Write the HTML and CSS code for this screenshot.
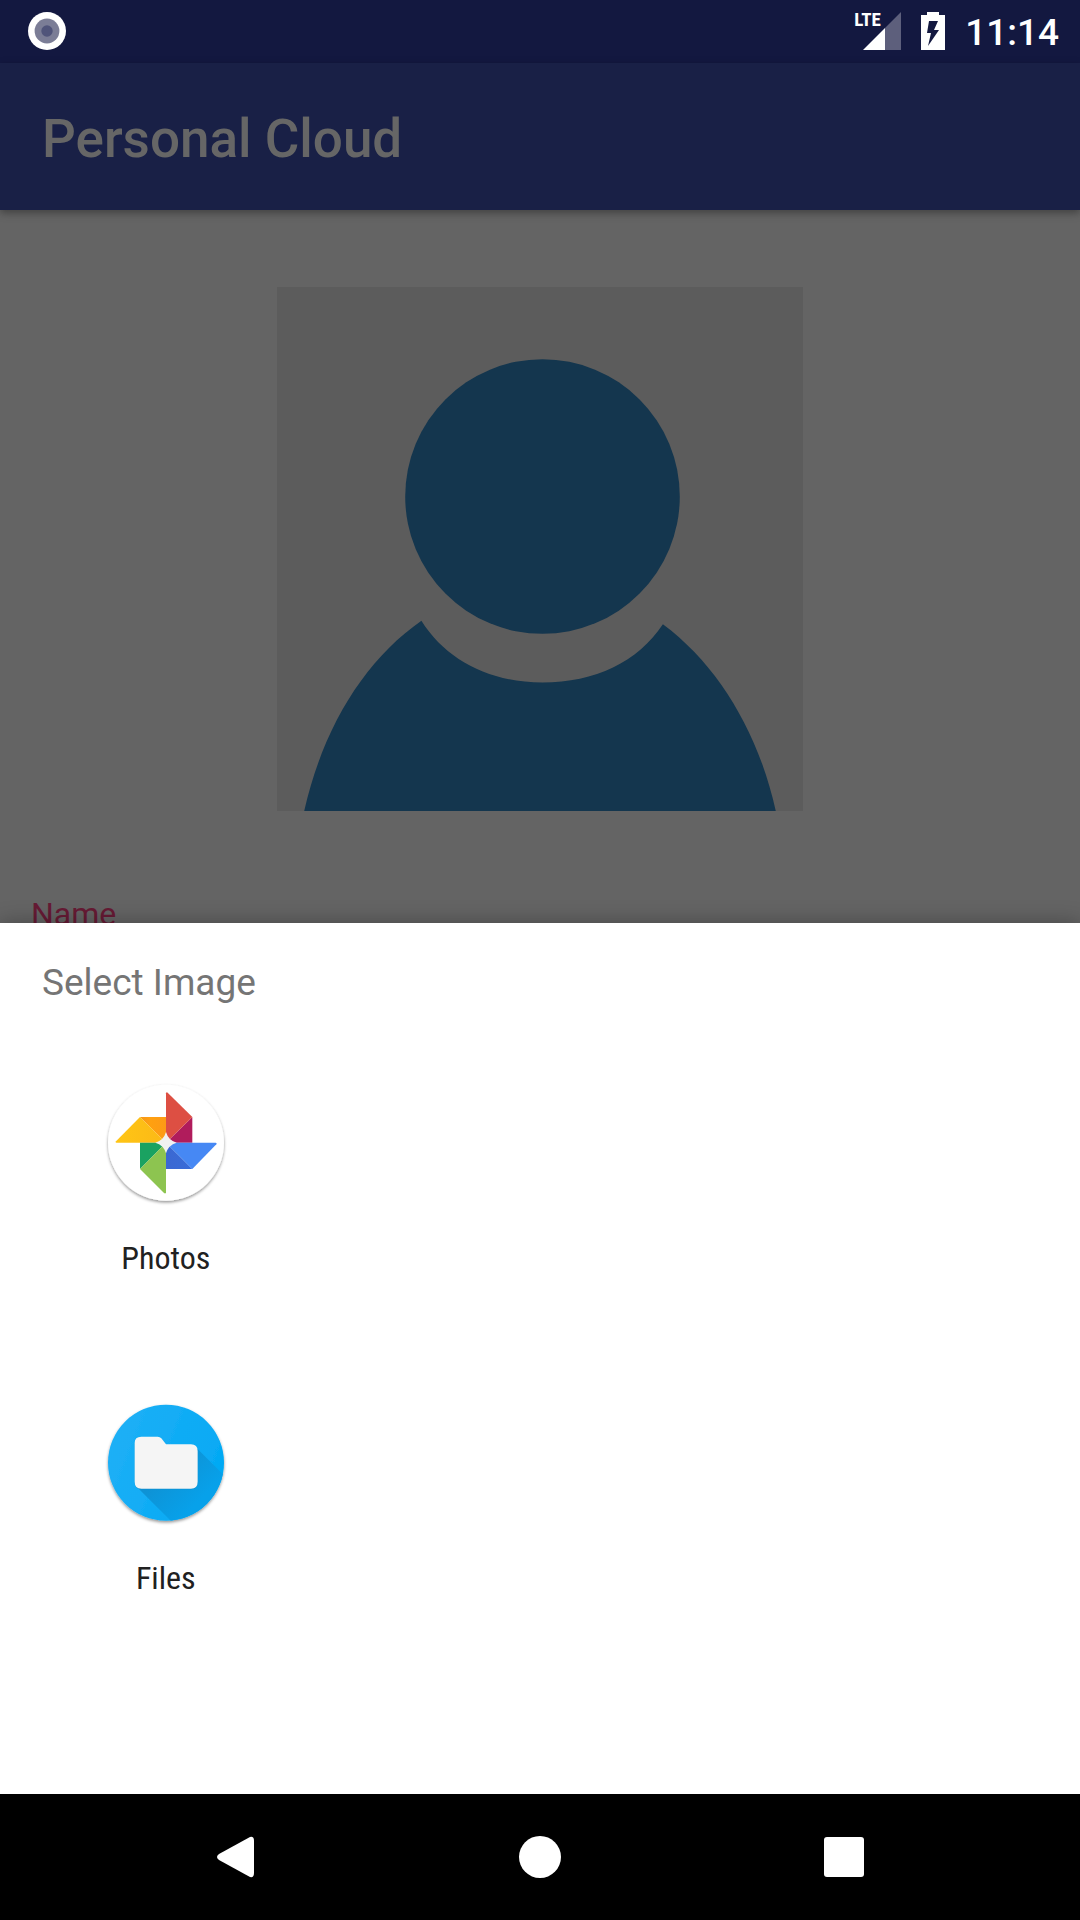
FILE: index.html
```html
<!DOCTYPE html>
<html lang="en">
<head>
<meta charset="utf-8">
<meta name="viewport" content="width=device-width, initial-scale=1">
<title>Personal Cloud</title>
<link rel="stylesheet" href="styles.css">
</head>
<body class="screen">
  <div class="status-bar">
    <svg class="status-app" viewBox="0 0 40 40" aria-hidden="true">
      <circle cx="20" cy="20" r="19" fill="#fff"/>
      <circle cx="20" cy="20" r="12.4" fill="#7b7d96"/>
      <circle cx="20" cy="20" r="5.7" fill="#50547a"/>
    </svg>
    <div class="status-icons">
      <div class="signal">
        <span class="signal-type">LTE</span>
        <svg class="signal-bars" viewBox="0 0 38 38" aria-hidden="true">
          <path d="M22 16 38 0V38H22Z" fill="#5d5f7c"/>
          <path d="M0 38 22 16V38Z" fill="#fff"/>
        </svg>
      </div>
      <svg class="battery" viewBox="0 0 24 38" aria-hidden="true">
        <path d="M6 0H18V3H24V38H0V3H6Z" fill="#fff"/>
        <path d="M8 9H17L13 18H18L7 34 10 21H6Z" fill="#131840"/>
      </svg>
      <time class="clock">11:14</time>
    </div>
  </div>

  <header class="app-bar"><h1 class="app-title">Personal Cloud</h1></header>

  <main class="profile">
    <svg class="avatar" viewBox="-1 0 526 524" role="img" aria-label="Profile picture">
      <rect x="-1" width="526" height="524" fill="#5c5c5c"/>
      <circle cx="264.5" cy="209.5" r="137.3" fill="#14364e"/>
      <path d="M26 525C45 440 87 373 143.4 333.7C168 373 212 395.5 264.5 395.5C317 395.5 360 375 384.9 337.3C441 379 481 447 498 525Z" fill="#14364e"/>
    </svg>
    <p class="field-label">Name</p>
  </main>

  <section class="sheet" aria-labelledby="sheet-title">
    <h2 class="sheet-title" id="sheet-title">Select Image</h2>
    <div class="targets">
      <button class="target" type="button">
        <svg class="target-icon" viewBox="39 30 378 378" aria-hidden="true">
          <defs>
            <filter id="drop" x="-10%" y="-10%" width="120%" height="125%">
              <feDropShadow dx="0" dy="5" stdDeviation="4" flood-color="#000" flood-opacity=".42"/>
            </filter>
            <linearGradient id="yellow" x1="0" x2="1"><stop offset="0" stop-color="#ffc515"/><stop offset="1" stop-color="#fbb917"/></linearGradient>
            <linearGradient id="orange" x1="0" x2="1"><stop offset="0" stop-color="#f5961a"/><stop offset=".4" stop-color="#ffa010"/><stop offset="1" stop-color="#fd9a16"/></linearGradient>
            <linearGradient id="blue" x1="0" x2="1"><stop offset="0" stop-color="#3b68d2"/><stop offset="1" stop-color="#396cd8"/></linearGradient>
          </defs>
          <circle cx="228" cy="218" r="174" fill="#fff" filter="url(#drop)"/>
          <path d="M150 141H228V218Z" fill="url(#orange)"/>
          <path d="M150 141 228 218H79Q75 218 78 214Z" fill="url(#yellow)"/>
          <path d="M307 141V218H228Z" fill="#b01c5c"/>
          <path d="M228 218V70Q229 65 233 68L307 141Z" fill="#dd4f43"/>
          <path d="M228 218V297H307Z" fill="url(#blue)"/>
          <path d="M228 218H377Q382 219 379 223L307 297Z" fill="#4688f4"/>
          <path d="M228 218H150V297Z" fill="#1aa261"/>
          <path d="M228 218V368Q226 372 222 369L150 297Z" fill="#8dc450"/>
          <path d="M228 186Q235 211 260 218Q235 225 228 250Q221 225 196 218Q221 211 228 186Z" fill="#f1f1f1"/>
        </svg>
        <span class="target-label">Photos</span>
      </button>
      <button class="target" type="button">
        <svg class="target-icon" viewBox="39 30 378 378" aria-hidden="true">
          <defs>
            <linearGradient id="sky" x1="0" y1=".2" x2="1" y2=".6"><stop offset="0" stop-color="#20b0f6"/><stop offset="1" stop-color="#03a9f4"/></linearGradient>
            <linearGradient id="cast" gradientUnits="userSpaceOnUse" x1="190" y1="250" x2="300" y2="360"><stop offset="0" stop-color="#0f90d2"/><stop offset="1" stop-color="#07a1ea"/></linearGradient>
            <clipPath id="disc"><circle cx="228" cy="218" r="174"/></clipPath>
          </defs>
          <circle cx="228" cy="218" r="174" fill="url(#sky)" filter="url(#drop)"/>
          <path d="M140 290 319 173 419 273V430H280Z" fill="url(#cast)" clip-path="url(#disc)"/>
          <path d="M154 142H203Q210 142 214 147L228 165H303Q323 165 323 185V277Q323 298 303 298H154Q134 298 134 277V161Q134 142 154 142Z" fill="#0a83bd" opacity=".5"/>
          <path d="M154 140H203Q210 140 214 145L228 163H303Q323 163 323 183V275Q323 296 303 296H154Q134 296 134 275V159Q134 140 154 140Z" fill="#f5f5f5"/>
        </svg>
        <span class="target-label">Files</span>
      </button>
    </div>
  </section>

  <nav class="nav-bar" aria-label="System">
    <button class="nav-button" type="button" aria-label="Back">
      <svg class="nav-icon" viewBox="0 0 42 42" aria-hidden="true"><path d="M35 1Q39 0 39 5V37Q39 42 35 41L4 24Q0 21 4 18Z" fill="#fff"/></svg>
    </button>
    <button class="nav-button" type="button" aria-label="Home">
      <svg class="nav-icon" viewBox="0 0 42 42" aria-hidden="true"><circle cx="21" cy="21" r="21" fill="#fff"/></svg>
    </button>
    <button class="nav-button" type="button" aria-label="Recent apps">
      <svg class="nav-icon" viewBox="0 0 42 42" aria-hidden="true"><rect x="1" y="1" width="40" height="40" rx="3" fill="#fff"/></svg>
    </button>
  </nav>
</body>
</html>
```
FILE: styles.css
```css
* { box-sizing: border-box; margin: 0; }

.screen {
  display: flex;
  flex-direction: column;
  min-height: 100vh;
  background: #646464;
  font-family: Roboto, sans-serif;
}

button {
  border: 0;
  padding: 0;
  background: none;
  font: inherit;
  color: inherit;
}

svg { display: block; }

.status-bar {
  display: flex;
  align-items: center;
  justify-content: space-between;
  height: 63px;
  padding: 0 21px 1px 27px;
  background: #131840;
  color: #fff;
}

.status-app { width: 40px; height: 40px; }

.status-icons { display: flex; align-items: center; gap: 20px; }

.signal { position: relative; padding-left: 9px; }

.signal-type {
  position: absolute;
  top: -2px;
  left: 0;
  font: 700 19px/20px "Roboto Condensed", "Liberation Sans Narrow", Roboto, sans-serif;
}

.signal-bars { width: 38px; height: 38px; }
.battery { width: 24px; height: 38px; }

.clock {
  padding-top: 4px;
  font-size: 37px;
  line-height: 44px;
  font-weight: 500;
}

.app-bar {
  z-index: 1;
  display: flex;
  align-items: center;
  height: 147px;
  padding: 4px 42px 0;
  background: #192046;
  box-shadow: 0 3px 8px rgba(0, 0, 0, .35);
}

.app-title {
  font-size: 53px;
  line-height: 62px;
  font-weight: 500;
  color: #666;
}

.profile {
  flex: 1 0 0;
  display: flex;
  flex-direction: column;
  gap: 84px;
  height: 0;
  padding: 77px 31px 0;
  overflow: hidden;
}

.avatar {
  flex: none;
  align-self: center;
  width: 526px;
  height: 524px;
}

.field-label {
  font-size: 32px;
  line-height: 38px;
  color: #661a34;
}

.sheet {
  z-index: 1;
  padding: 38px 0 113px;
  background: #fff;
  box-shadow: 0 0 20px rgba(0, 0, 0, .3);
}

.sheet-title {
  padding: 0 42px;
  font-size: 37px;
  line-height: 44px;
  font-weight: 400;
  color: #757575;
}

.targets {
  display: grid;
  grid-template-columns: repeat(4, 1fr);
  grid-auto-rows: 320px;
  padding: 36px 41px 0;
}

.target {
  grid-column: 1;
  display: flex;
  flex-direction: column;
  align-items: center;
  gap: 33px;
  padding-top: 39px;
}

.target-icon { width: 126px; height: 126px; }

.target-label {
  font-family: "Roboto Condensed", "Liberation Sans Narrow", Roboto, sans-serif;
  font-size: 32px;
  line-height: 38px;
  color: #212121;
}

.nav-bar {
  z-index: 1;
  display: grid;
  grid-template-columns: repeat(3, 1fr);
  height: 126px;
  padding: 0 84px;
  background: #000;
}

.nav-button { display: grid; place-items: center; }
.nav-icon { width: 42px; height: 42px; }
```
